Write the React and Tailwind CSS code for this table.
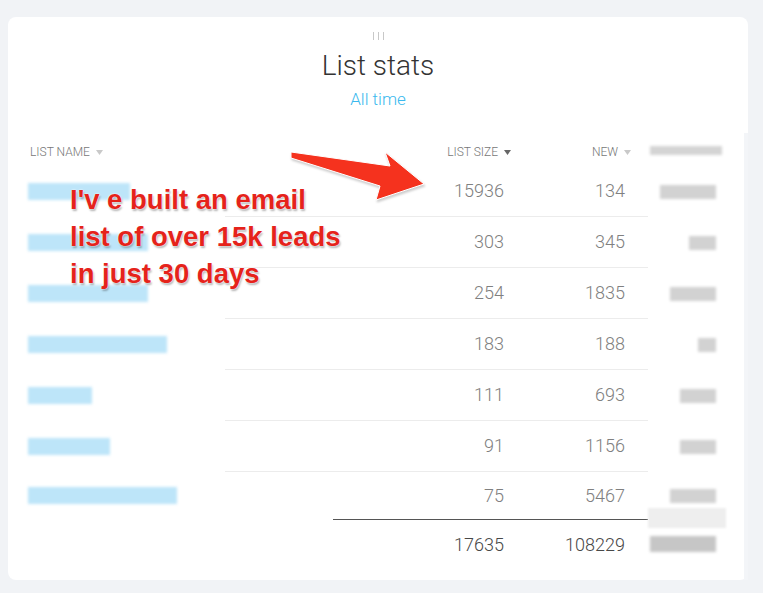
import React from "react";

const rows = [
  { name: 102, size: "15936", fresh: "134", extra: 56 },
  { name: 120, size: "303", fresh: "345", extra: 27 },
  { name: 120, size: "254", fresh: "1835", extra: 46 },
  { name: 139, size: "183", fresh: "188", extra: 18 },
  { name: 64, size: "111", fresh: "693", extra: 36 },
  { name: 82, size: "91", fresh: "1156", extra: 36 },
  { name: 149, size: "75", fresh: "5467", extra: 46 },
];

const SortArrow = ({ active }) => (
  <svg width="7" height="5" viewBox="0 0 7 5" className="ml-[6px] inline-block">
    <path d="M0 0 L7 0 L3.5 5 Z" fill={active ? "#666" : "#c9c9c9"} />
  </svg>
);

const App = () => {
  return (
    <div className="h-[593px] w-[763px] overflow-hidden bg-[#f1f3f6] pt-[17px] pl-[8px] font-['Roboto',sans-serif]">
      <div className="relative flex h-[563px] w-[740px] flex-col rounded-[8px] bg-white">
        {/* drag handle */}
        <div className="flex justify-center gap-[4px] pt-[15px]">
          <span className="h-[8px] w-px bg-[#c8c8c8]" />
          <span className="h-[8px] w-px bg-[#c8c8c8]" />
          <span className="h-[8px] w-px bg-[#c8c8c8]" />
        </div>

        <h1 className="mt-[9px] text-center text-[28px] font-light leading-[34px] text-[#333]">
          List stats
        </h1>
        <p className="mt-[6px] text-center text-[17px] font-light leading-[20px] text-[#3bb9ee]">
          All time
        </p>

        {/* table */}
        <div className="mt-[24px] flex-1 border-r-4 border-[#f3f5f8] pl-[20px] pr-[18px]">
          <div className="flex h-[33px] items-start pt-[13px] text-[12px] font-light leading-[12px] text-[#777]">
            <div className="flex w-[197px] items-center pl-[2px]">
              LIST NAME
              <SortArrow />
            </div>
            <div className="flex flex-1">
              <div className="flex w-[286px] items-center justify-end">
                LIST SIZE
                <SortArrow active />
              </div>
              <div className="flex w-[120px] items-center justify-end">
                NEW
                <SortArrow />
              </div>
            </div>
            <div className="w-[78px] pl-[2px]">
              <div className="h-[9px] w-[72px] bg-[#d4d4d4] blur-[1.5px]" />
            </div>
          </div>

          {rows.map((row, i) => {
            const last = i === rows.length - 1;
            return (
              <div
                key={i}
                className={`flex ${last ? "h-[47px]" : "h-[51px]"}`}
              >
                <div className="flex w-[197px] items-center">
                  <div
                    className="h-[17px] bg-[#bde5f9] blur-[1.5px]"
                    style={{ width: row.name }}
                  />
                </div>
                <div
                  className={`flex flex-1 items-center text-[18px] font-light leading-none text-[#808080] ${
                    last ? "" : "border-b border-[#ececec]"
                  }`}
                >
                  <div className="w-[286px] pr-[7px] text-right">{row.size}</div>
                  <div className="w-[120px] pr-[6px] text-right">{row.fresh}</div>
                </div>
                <div className="relative flex w-[78px] items-center justify-end pr-[10px]">
                  <div
                    className="h-[14px] bg-[#d2d2d2] blur-[1.5px]"
                    style={{ width: row.extra }}
                  />
                  {last && (
                    <div className="absolute bottom-[-9px] left-0 h-[20px] w-[78px] bg-[#eeeeee] blur-[1px]" />
                  )}
                </div>
              </div>
            );
          })}

          {/* totals */}
          <div className="flex h-[50px]">
            <div className="w-[197px]" />
            <div className="flex flex-1">
              <div className="ml-[108px] flex flex-1 items-center border-t border-[#555] text-[18px] font-light leading-none text-[#484848]">
                <div className="w-[178px] pr-[7px] text-right">17635</div>
                <div className="w-[120px] pr-[6px] text-right">108229</div>
              </div>
            </div>
            <div className="flex w-[78px] items-center justify-end pr-[10px]">
              <div className="h-[16px] w-[66px] bg-[#c6c6c6] blur-[1.5px]" />
            </div>
          </div>
        </div>

        {/* annotation arrow */}
        <svg
          width="160"
          height="70"
          viewBox="0 0 160 70"
          className="absolute left-[272px] top-[123px] drop-shadow-[1px_2px_1px_rgba(0,0,0,0.2)]"
        >
          <polygon
            points="11,12 110,26 105,12 144,44 96,60 100,46 11,18"
            fill="#f5321e"
            stroke="#ffffff"
            strokeWidth="1"
            strokeLinejoin="round"
          />
        </svg>

        {/* annotation text */}
        <div className="absolute left-[62px] top-[164px] font-['Liberation_Sans',Arial,sans-serif] text-[27.5px] font-bold leading-[37px] text-[#e5231b] [text-shadow:0_0_1px_#fff,0_0_2px_#fff,1px_2px_2px_rgba(0,0,0,0.3)]">
          <div>I'v e built an email</div>
          <div>list of over 15k leads</div>
          <div>in just 30 days</div>
        </div>
      </div>
    </div>
  );
};

export default App;
